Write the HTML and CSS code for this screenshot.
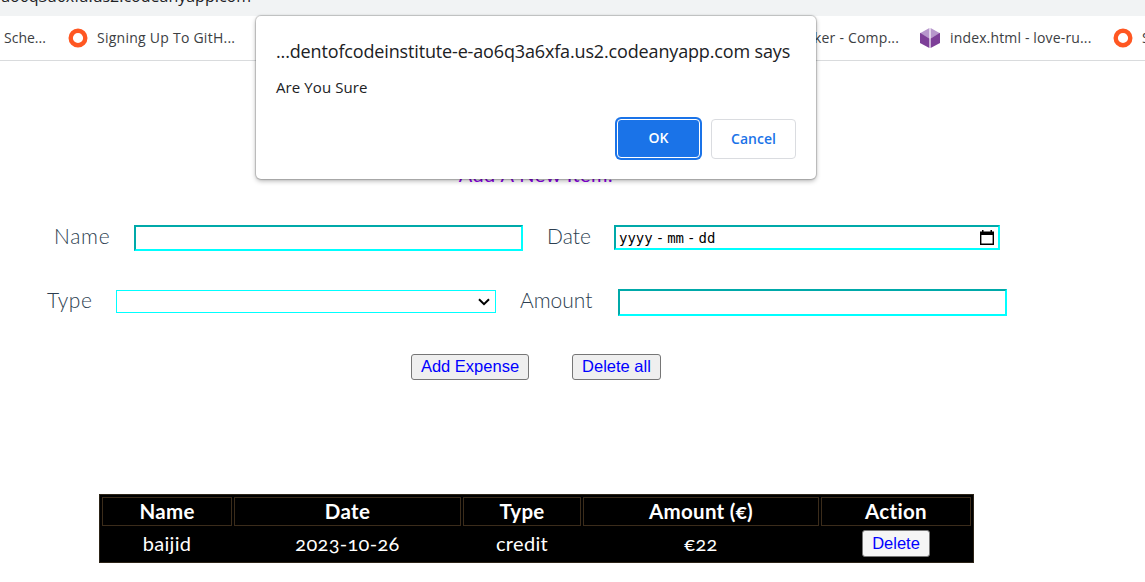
FILE: index.html
```html
<!DOCTYPE html>
<html lang="en">
<head>
<meta charset="utf-8">
<title>Expense tracker</title>
<link rel="stylesheet" href="styles.css">
</head>
<body>
<header class="address-bar"><span class="address-text">ao6q3a6xfa.us2.codeanyapp.com</span></header>
<nav class="bookmarks">
  <span class="bm bm-sche">Sche...</span>
  <svg class="ring" viewBox="0 0 20 20"><circle cx="10" cy="10" r="7.3"/></svg>
  <span class="bm bm-sign">Signing Up To GitH...</span>
  <span class="bm bm-comp">ker - Comp...</span>
  <svg class="cube" viewBox="0 0 20 20">
    <path fill="#b797cc" d="M9.4 0 0 5.2 9.4 10.4zM10.6 0 20 5.2 10.6 10.4z"/>
    <path fill="#7d3f98" d="M0 4.8 9.4 10.6V20L0 15zM20 4.8 10.6 10.6V20L20 15z"/>
  </svg>
  <span class="bm bm-index">index.html - love-ru...</span>
  <svg class="ring" viewBox="0 0 20 20"><circle cx="10" cy="10" r="7.3"/></svg>
  <span class="bm bm-last">S</span>
</nav>
<main class="page">
  <h2 class="heading">Add A New Item:</h2>
  <div class="row row-one">
    <label class="label w-name">Name</label><div class="field f-name"></div>
    <label class="label w-date">Date</label>
    <div class="field f-date"><span class="date-text"><span>yyyy</span><span>-</span><span>mm</span><span>-</span><span>dd</span></span>
      <svg class="calendar" viewBox="0 0 14 15"><path d="M0 1.5h2V0h1.5v1.5h7V0H12v1.5h2V15H0zM1.4 5v8.6h11.2V5z" fill-rule="evenodd"/></svg>
    </div>
  </div>
  <div class="row row-two">
    <label class="label w-type">Type</label>
    <div class="select"><svg class="chevron" viewBox="0 0 12 8"><path d="M1 1.2 6 6.2 11 1.2"/></svg></div>
    <label class="label w-amount">Amount</label><div class="field f-amount"></div>
  </div>
  <div class="actions"><button class="btn b-add">Add Expense</button><button class="btn b-all">Delete all</button></div>
  <div class="table">
    <div class="th">Name</div><div class="th">Date</div><div class="th">Type</div><div class="th">Amount (€)</div><div class="th">Action</div>
    <div class="td">baijid</div><div class="td">2023-10-26</div><div class="td">credit</div><div class="td">€22</div><div class="td"><button class="btn b-del">Delete</button></div>
  </div>
</main>
<section class="dialog">
  <h1 class="dialog-title">...dentofcodeinstitute-e-ao6q3a6xfa.us2.codeanyapp.com says</h1>
  <p class="dialog-message">Are You Sure</p>
  <div class="dialog-actions"><button class="ok">OK</button><button class="cancel">Cancel</button></div>
</section>
</body>
</html>
```
FILE: styles.css
```css
* { box-sizing: border-box; }
body { margin: 0; width: 1145px; height: 582px; overflow: hidden; background: #fff; position: relative; font-family: "Open Sans", sans-serif; }
button { font: inherit; margin: 0; padding: 0; }
.address-bar { height: 16px; background: #f1f3f4; overflow: hidden; display: flex; align-items: flex-end; }
.address-text { width: 251px; flex: none; height: 28px; line-height: 16px; font-size: 16px; color: #202124; white-space: nowrap; display: flex; justify-content: flex-end; }
.bookmarks { height: 45px; border-bottom: 1px solid #d9dbdd; display: flex; align-items: center; overflow: hidden; font-size: 14px; color: #3c4043; }
.bm { flex: none; white-space: nowrap; line-height: 20px; }
.bm-sche { width: 68px; padding-left: 4px; }
.bm-sign { width: 726px; padding-left: 9px; letter-spacing: .25px; }
.bm-comp { width: 106px; letter-spacing: .2px; }
.bm-index { width: 173px; padding-left: 10px; letter-spacing: .15px; }
.bm-last { padding-left: 9px; }
.ring { width: 20px; height: 20px; flex: none; }
.ring circle { fill: none; stroke: #ff5722; stroke-width: 4.4; }
.cube { width: 20px; height: 20px; flex: none; }
.page { font-family: Lato, sans-serif; }
.heading { margin: 100px 0 0; width: 1072px; height: 26px; line-height: 26px; text-align: center; font-size: 20px; font-weight: 400; color: #8a00e6; letter-spacing: .4px; }
.row { display: flex; }
.row-one { margin-top: 38px; padding-left: 54px; height: 64px; }
.row-two { padding-left: 47px; height: 65px; }
.label { flex: none; font-size: 21px; font-weight: 300; line-height: 21px; color: #2c3e50; white-space: nowrap; }
.w-name { width: 80px; letter-spacing: .7px; }
.w-date { width: 67px; margin-left: 24px; }
.w-type { width: 69px; letter-spacing: .5px; }
.w-amount { width: 98px; margin-left: 24px; }
.field { border: 2px solid; border-color: #00a9a9 #0ff #0ff #00a9a9; background: #fff; }
.f-name { width: 389px; height: 26px; }
.f-date { width: 386px; height: 25px; display: flex; align-items: center; justify-content: space-between; padding: 0 4px 0 3px; font-family: "DejaVu Sans Mono", monospace; font-size: 14px; color: #000; }
.date-text { display: flex; gap: 3px; line-height: 20px; }
.calendar { width: 14px; height: 15px; }
.select { width: 380px; height: 23px; margin-top: 1px; border: 1px solid #0ff; display: flex; align-items: center; justify-content: flex-end; padding-right: 5px; }
.chevron { width: 12px; height: 8px; fill: none; stroke: #000; stroke-width: 2; }
.f-amount { width: 389px; height: 27px; }
.actions { display: flex; gap: 43px; padding-left: 411px; height: 140px; }
.btn { height: 26px; padding-bottom: 2px; border: 1px solid #767676; border-radius: 3px; background: #efefef; color: #00f; font-family: "Liberation Sans", sans-serif; font-size: 16.5px; line-height: 22px; white-space: nowrap; }
.b-add { width: 118px; }
.b-all { width: 89px; }
.table { margin-left: 99px; width: 875px; height: 69px; padding: 2px; border: 1px solid #2c2418; background: #000; color: #fff; display: grid; grid-template-columns: 130px 227px 118px 236px 150px; grid-template-rows: 29px 32px; gap: 2px; font-size: 20px; font-variant-numeric: oldstyle-nums; letter-spacing: .3px; }
.th { border: 1px solid #3b2c1b; font-size: 20.5px; font-weight: 700; text-align: center; line-height: 26px; }
.td { text-align: center; line-height: 30px; }
.td .btn { display: block; width: 68px; height: 27px; margin: 2px auto 0; background: #f5f5f5; letter-spacing: 0; }
.dialog { position: absolute; left: 256px; top: 16px; width: 560px; height: 163px; padding: 23px 20px 0; background: #fff; border-radius: 5px; box-shadow: 0 0 1px 1px rgba(0,0,0,.18), 0 2px 5px rgba(0,0,0,.3); color: #202124; }
.dialog-title { margin: 0; font-size: 18px; line-height: 24px; font-weight: 400; letter-spacing: -.15px; white-space: nowrap; }
.dialog-message { margin: 12px 0 0; font-size: 15px; line-height: 24px; letter-spacing: .1px; }
.dialog-actions { display: flex; justify-content: flex-end; gap: 11px; margin-top: 20px; font-size: 14px; font-weight: 600; }
.dialog-actions button { padding-bottom: 2px; }
.ok { width: 83px; height: 39px; border: 1px solid #fff; border-radius: 4px; color: #fff; background: #1a73e8; box-shadow: 0 0 0 2px #1a73e8; }
.cancel { width: 85px; height: 40px; border: 1px solid #dadce0; border-radius: 4px; color: #1a73e8; background: #fff; }
```
